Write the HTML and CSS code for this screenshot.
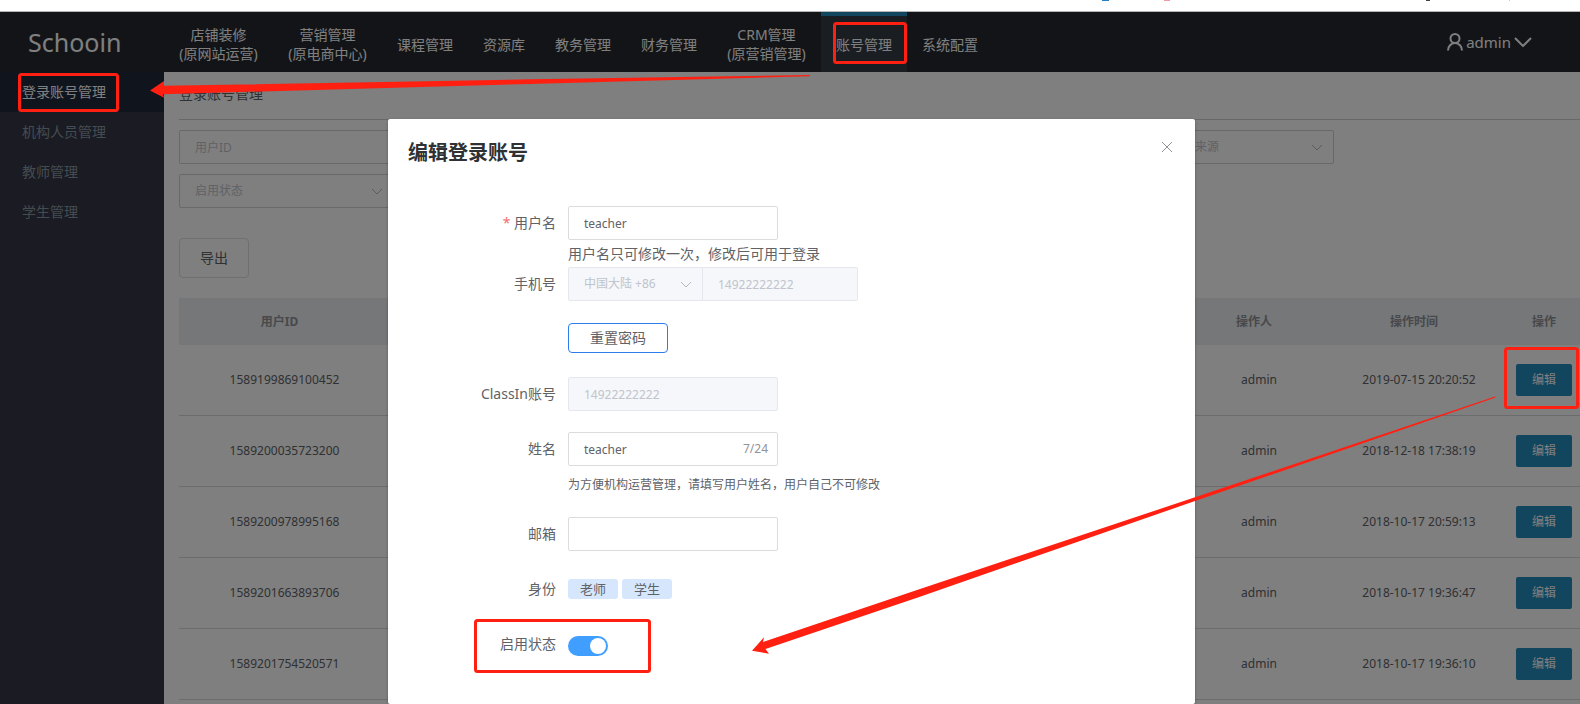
FILE: index.html
```html
<!DOCTYPE html>
<html lang="zh-CN">
<head>
<meta charset="utf-8">
<title>Schooin</title>
<link rel="stylesheet" href="styles.css">
</head>
<body>
<div class="strip">
  <svg width="480" height="2" viewBox="0 0 480 2" aria-hidden="true">
    <rect x="2" width="7" height="1" fill="#2b7fc0"/>
    <rect x="64" width="6" height="1" fill="#f59aa5"/>
    <rect x="326" width="4" height="1" fill="#444"/>
    <rect x="409" width="1" height="1" fill="#ccc"/>
  </svg>
</div>
<div class="app">
  <header class="header">
    <div class="brand">Schooin</div>
    <nav class="nav">
      <a href="#" class="double">店铺装修<br>(原网站运营)</a>
      <a href="#" class="double">营销管理<br>(原电商中心)</a>
      <a href="#">课程管理</a>
      <a href="#">资源库</a>
      <a href="#">教务管理</a>
      <a href="#">财务管理</a>
      <a href="#" class="double">CRM管理<br>(原营销管理)</a>
      <a href="#" class="active">账号管理</a>
      <a href="#">系统配置</a>
    </nav>
    <button class="user" type="button">
      <svg width="16" height="18" viewBox="0 0 16 18" fill="none" stroke="currentColor" stroke-width="2"><circle cx="8" cy="5.5" r="4.5"/><path d="M1 17.5c0-4 3-7.500 7-7.500s7 3.500 7 7.500"/></svg>
      <span>admin</span>
      <svg width="18" height="10" viewBox="0 0 18 10" fill="none" stroke="currentColor" stroke-width="2"><path d="M1 1l8 8 8-8"/></svg>
    </button>
  </header>
  <div class="body">
    <aside class="sidebar">
      <a href="#" class="active">登录账号管理</a>
      <a href="#">机构人员管理</a>
      <a href="#">教师管理</a>
      <a href="#">学生管理</a>
    </aside>
    <main class="main">
      <h1 class="page-title">登录账号管理</h1>
      <div class="filters">
        <input class="field" type="text" placeholder="用户ID" aria-label="用户ID">
        <input class="field" type="text" aria-label="筛选">
        <input class="field" type="text" aria-label="筛选">
        <input class="field" type="text" aria-label="筛选">
        <div class="select">
          <select class="field source" aria-label="来源"><option>来源</option></select>
          <svg class="chevron" width="12" height="7" viewBox="0 0 12 7"><path d="M1 1l5 5 5-5"/></svg>
        </div>
        <div class="select">
          <select class="field" aria-label="启用状态"><option>启用状态</option></select>
          <svg class="chevron" width="12" height="7" viewBox="0 0 12 7"><path d="M1 1l5 5 5-5"/></svg>
        </div>
      </div>
      <button class="export" type="button">导出</button>
      <table class="table">
        <colgroup><col class="c-id"><col><col class="c-user"><col class="c-time"><col class="c-act"></colgroup>
        <thead>
          <tr><th class="sortable">用户ID</th><th></th><th class="sortable">操作人</th><th class="sortable">操作时间</th><th>操作</th></tr>
        </thead>
        <tbody>
          <tr><td>1589199869100452</td><td></td><td>admin</td><td>2019-07-15 20:20:52</td><td><button class="edit" type="button">编辑</button></td></tr>
          <tr><td>1589200035723200</td><td></td><td>admin</td><td>2018-12-18 17:38:19</td><td><button class="edit" type="button">编辑</button></td></tr>
          <tr><td>1589200978995168</td><td></td><td>admin</td><td>2018-10-17 20:59:13</td><td><button class="edit" type="button">编辑</button></td></tr>
          <tr><td>1589201663893706</td><td></td><td>admin</td><td>2018-10-17 19:36:47</td><td><button class="edit" type="button">编辑</button></td></tr>
          <tr><td>1589201754520571</td><td></td><td>admin</td><td>2018-10-17 19:36:10</td><td><button class="edit" type="button">编辑</button></td></tr>
        </tbody>
      </table>
    </main>
  </div>

  <div class="overlay">
    <section class="modal" role="dialog" aria-labelledby="dlg">
      <div class="modal-head">
        <h2 id="dlg">编辑登录账号</h2>
        <button class="close" type="button" aria-label="关闭"><svg width="12" height="12" viewBox="0 0 12 12" fill="none" stroke="currentColor"><path d="M1 1l10 10M11 1L1 11"/></svg></button>
      </div>
      <form class="form">
        <div class="row">
          <label for="username"><span class="req">*</span> 用户名</label>
          <div class="control"><input id="username" class="field" type="text" value="teacher"><p class="tip">用户名只可修改一次，修改后可用于登录</p></div>
        </div>
        <div class="row row-phone">
          <label for="phone">手机号</label>
          <div class="control phone">
            <div class="select area">
              <select class="field" disabled aria-label="地区"><option>中国大陆 +86</option></select>
              <svg class="chevron" width="12" height="7" viewBox="0 0 12 7"><path d="M1 1l5 5 5-5"/></svg>
            </div>
            <input id="phone" class="field number" type="text" value="14922222222" disabled>
          </div>
        </div>
        <div class="row row-reset"><button class="reset" type="button">重置密码</button></div>
        <div class="row row-classin">
          <label for="classin">ClassIn账号</label>
          <div class="control"><input id="classin" class="field" type="text" value="14922222222" disabled></div>
        </div>
        <div class="row row-name">
          <label for="name">姓名</label>
          <div class="control">
            <div class="counted"><input id="name" class="field" type="text" value="teacher"><span class="count">7/24</span></div>
            <p class="note">为方便机构运营管理，请填写用户姓名，用户自己不可修改</p>
          </div>
        </div>
        <div class="row row-mail">
          <label for="mail">邮箱</label>
          <div class="control"><input id="mail" class="field" type="text"></div>
        </div>
        <div class="row row-role">
          <div class="label">身份</div>
          <div class="tags"><span class="tag">老师</span><span class="tag">学生</span></div>
        </div>
        <div class="row row-status">
          <label for="status">启用状态</label>
          <input id="status" class="switch" type="checkbox" role="switch" checked>
        </div>
      </form>
    </section>
  </div>
</div>
<svg class="marks" width="1580" height="704" viewBox="0 0 1580 704" aria-hidden="true">
  <g fill="none" stroke="#ff2012" stroke-width="3">
    <rect x="19.500" y="74.500" width="98" height="36" rx="2"/>
    <rect x="834.500" y="23.500" width="71" height="39" rx="2"/>
    <rect x="1505.500" y="348.500" width="72" height="59" rx="2"/>
    <rect x="475.500" y="620.500" width="174" height="51" rx="2"/>
  </g>
  <g fill="#ff2012">
    <path d="M150 90.500L164 81v4.800L530 79.300 810 75v1.200L530 84 163 94.200l1 3.600z"/>
    <path d="M752 650.700L764 637.300l-1 4.700L920 589 1195 497.300 1495 396.600l.5 1L1195 501 920 596.700 765.500 649l3.500 4.700z"/>
  </g>
</svg>
</body>
</html>
```
FILE: styles.css
```css
* { box-sizing: border-box; }
html, body { margin: 0; height: 100%; }
body {
  position: relative;
  display: flex;
  flex-direction: column;
  overflow: hidden;
  background: #fff;
  color: #606266;
  font: 14px/20px "Noto Sans", "Noto Sans CJK SC", sans-serif;
}
button, input, select { font: inherit; color: inherit; margin: 0; }
a { color: inherit; text-decoration: none; }
h1, h2, p { margin: 0; }

.strip {
  flex: none;
  display: flex;
  justify-content: flex-end;
  height: 12px;
  border-bottom: 1px solid #b4b6b8;
}
.app {
  position: relative;
  flex: 1;
  min-height: 0;
  display: flex;
  flex-direction: column;
  overflow: hidden;
}

.header {
  flex: none;
  display: flex;
  height: 60px;
  background: #24282e;
  color: #fff;
}
.brand {
  flex: none;
  width: 164px;
  padding-left: 28px;
  font-size: 25px;
  line-height: 60px;
}
.nav { display: flex; flex: 1; }
.nav a {
  display: flex;
  align-items: center;
  justify-content: center;
  padding: 0 15px;
  border-top: 4px solid transparent;
  line-height: 19px;
  text-align: center;
  white-space: nowrap;
}
.nav .double { min-width: 109px; }
.nav .active { background: #343a42; border-top-color: #228cbc; }
.user {
  display: flex;
  align-items: center;
  gap: 3px;
  margin-right: 48px;
  padding: 0;
  border: 0;
  background: none;
  font-size: 15px;
}

.body { flex: 1; display: flex; min-height: 0; }
.sidebar { flex: none; width: 164px; background: #363646; color: #8799a2; }
.sidebar a { display: block; padding-left: 22px; line-height: 40px; }
.sidebar .active { background: #20283a; color: #fff; }

.main { flex: 1; min-width: 0; padding-left: 15px; background: #fff; }
.page-title {
  height: 48px;
  padding-top: 2px;
  border-bottom: 1px solid #d0d0d4;
  color: #606266;
  font-size: 14px;
  font-weight: 400;
  line-height: 40px;
}
.filters {
  display: grid;
  grid-template-columns: repeat(5, 215px);
  gap: 10px 20px;
  padding-top: 10px;
}
.field {
  display: block;
  width: 100%;
  height: 34px;
  padding: 0 15px;
  border: 1px solid #dcdcdc;
  border-radius: 2px;
  background: #fff;
  font-size: 12px;
  line-height: 18px;
  appearance: none;
  opacity: 1;
}
.filters .field { border-color: #d0d2d6; color: #c0c4cc; }
.field::placeholder { color: #c0c4cc; }
.field:disabled { background: #f5f7fa; border-color: #e4e7ed; color: #c0c4cc; }
.filters .source { padding-left: 75px; }
.select { position: relative; }
.chevron {
  position: absolute;
  top: 14px;
  right: 11px;
  fill: none;
  stroke: #b4b8c0;
  pointer-events: none;
}
.export {
  display: block;
  width: 70px;
  height: 40px;
  margin: 30px 0 20px;
  border: 1px solid #dcdfe6;
  border-radius: 4px;
  background: #fff;
}

.table { width: 100%; border-collapse: separate; border-spacing: 0; table-layout: fixed; font-size: 12px; text-align: center; }
.c-id { width: 211px; }
.c-user { width: 142px; }
.c-time { width: 178px; }
.c-act { width: 72px; }
.table th { height: 47px; padding: 0; background: #ebeef2; color: #909399; }
.table .sortable { padding-right: 10px; }
.table td { height: 71px; padding: 0; border-bottom: 1px solid #d6d8dc; }
.edit {
  width: 56px;
  height: 32px;
  padding: 0;
  border: 0;
  border-radius: 2px;
  background: #228cbc;
  color: #fff;
}

.overlay {
  position: absolute;
  inset: 0;
  display: flex;
  justify-content: center;
  padding: 107px 0 0 3px;
  background: rgba(0, 0, 0, 0.5);
}
.modal {
  width: 807px;
  min-height: 100%;
  border-radius: 2px;
  background: #fff;
  box-shadow: 0 1px 3px rgba(0, 0, 0, 0.3);
}
.modal-head {
  display: flex;
  justify-content: space-between;
  align-items: flex-start;
  padding: 20px 20px 39px;
}
.modal-head h2 { color: #303133; font-size: 20px; line-height: 28px; font-weight: 700; }
.close { display: flex; padding: 2px; border: 0; background: none; color: #909399; }

.row { display: flex; gap: 12px; }
.row > label, .label { flex: none; width: 168px; line-height: 34px; text-align: right; }
.control { width: 210px; }
.req { color: #f56c6c; }
.tip { line-height: 27px; white-space: nowrap; }
.phone { display: flex; width: 290px; }
.area { width: 135px; }
.area .field { border-radius: 2px 0 0 2px; }
.number { flex: 1; width: auto; min-width: 0; border-left: 0; border-radius: 0 2px 2px 0; }
.row-phone { margin-bottom: 22px; }
.row-reset { margin-bottom: 24px; padding-left: 180px; }
.reset {
  width: 100px;
  height: 30px;
  padding: 0;
  border: 1px solid #2d7cea;
  border-radius: 4px;
  background: #fff;
}
.row-classin { margin-bottom: 21px; }
.row-name { margin-bottom: 23px; }
.counted { position: relative; }
.count { position: absolute; top: 8px; right: 10px; color: #909399; font-size: 12px; line-height: 18px; }
.note { padding-top: 10px; font-size: 12px; line-height: 18px; white-space: nowrap; }
.row-mail { margin-bottom: 28px; }
.row-role { margin-bottom: 37px; }
.row-role .label { line-height: 20px; }
.row-status label { line-height: 16px; }
.tags { display: flex; gap: 4px; }
.tag {
  width: 50px;
  border-radius: 3px;
  background: #d6e7fd;
  font-size: 13px;
  line-height: 20px;
  text-align: center;
}
.switch {
  position: relative;
  width: 40px;
  height: 20px;
  margin: 0;
  border-radius: 10px;
  background: #409eff;
  appearance: none;
}
.switch::after {
  content: "";
  position: absolute;
  top: 2px;
  right: 2px;
  width: 16px;
  height: 16px;
  border-radius: 50%;
  background: #fff;
}
.marks { position: absolute; top: 0; left: 0; pointer-events: none; }
```
